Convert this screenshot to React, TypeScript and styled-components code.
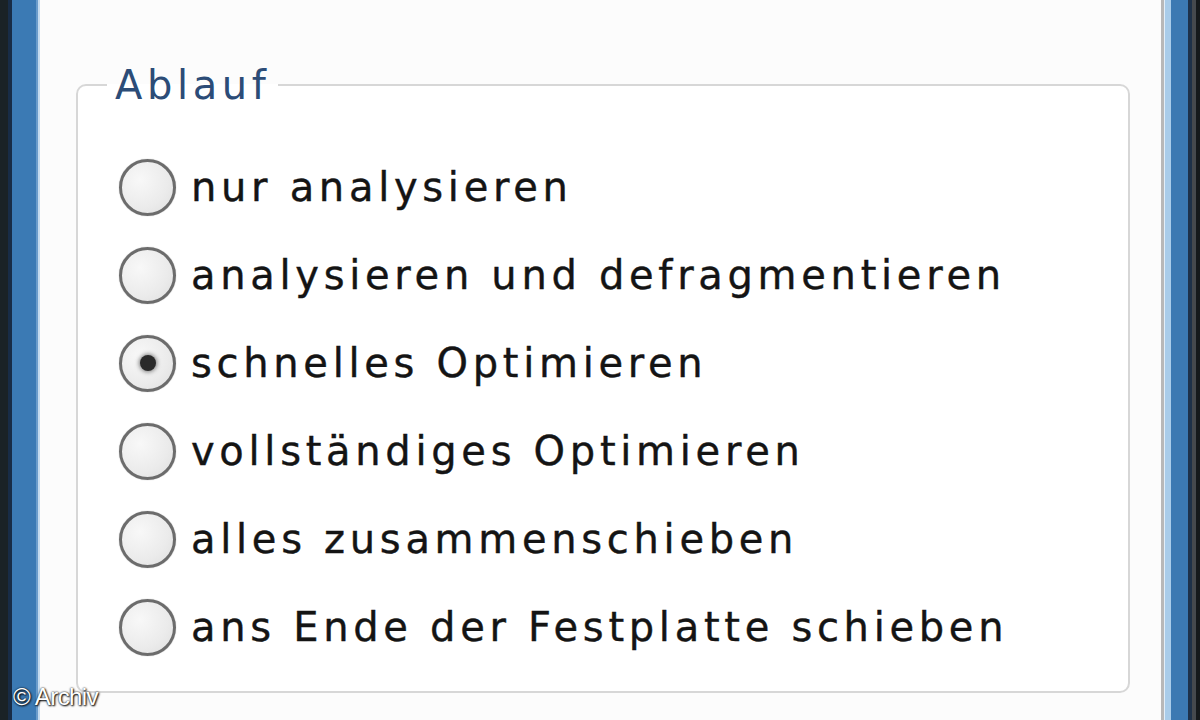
import styled, { createGlobalStyle } from 'styled-components'

const GlobalStyle = createGlobalStyle`
  html, body {
    margin: 0;
    padding: 0;
    background: #fcfcfc;
  }
`

const options = [
  { label: 'nur analysieren', checked: false },
  { label: 'analysieren und defragmentieren', checked: false },
  { label: 'schnelles Optimieren', checked: true },
  { label: 'vollständiges Optimieren', checked: false },
  { label: 'alles zusammenschieben', checked: false },
  { label: 'ans Ende der Festplatte schieben', checked: false }
]

const App = () => (
  <>
    <GlobalStyle />
    <Window>
      <Edge side="left" />
      <Body>
        <GroupBox>
          <Legend>Ablauf</Legend>
          <OptionList>
            {options.map(opt => (
              <OptionRow key={opt.label}>
                <Radio checked={opt.checked} />
                <OptionLabel>{opt.label}</OptionLabel>
              </OptionRow>
            ))}
          </OptionList>
        </GroupBox>
      </Body>
      <Edge side="right" />
      <Credit>© Archiv</Credit>
    </Window>
  </>
)

const Window = styled.div`
  position: relative;
  display: flex;
  width: 1200px;
  height: 720px;
  overflow: hidden;
`

const Edge = styled.div<{ side: 'left' | 'right' }>`
  flex: none;
  width: ${p => (p.side === 'left' ? 40 : 39)}px;
  background: ${p =>
    p.side === 'left'
      ? 'linear-gradient(to right, #1a2226 0 8px, #182c46 8px 12px, #3b7ab4 12px 36px, #6a9ccb 36px 38px, #c4dbef 38px 40px)'
      : 'linear-gradient(to right, #b8b8b8 0 3px, #e2eef8 3px 4px, #a9cce9 4px 10px, #3c79b2 10px 27px, #1e3149 27px 31px, #45494e 31px 35px, #15191c 35px 39px)'};
`

const Body = styled.div`
  flex: 1;
  background: #fcfcfc;
  padding: 65px 31px 0 36px;
`

const GroupBox = styled.fieldset`
  margin: 0;
  border: 2px solid #d7d7d7;
  border-radius: 10px;
  background: #fff;
  padding: 38px 20px 20px 41px;
  min-inline-size: 0;
`

const Legend = styled.legend`
  margin-left: -12px;
  padding: 0 8px;
  font-family: 'DejaVu Sans', Verdana, sans-serif;
  font-size: 40px;
  line-height: 40px;
  letter-spacing: 4.6px;
  color: #2c4c77;
`

const OptionList = styled.div`
  display: flex;
  flex-direction: column;
`

const OptionRow = styled.div`
  display: flex;
  align-items: center;
  gap: 15px;
  height: 88px;
`

const Radio = styled.span<{ checked: boolean }>`
  position: relative;
  flex: none;
  width: 51px;
  height: 51px;
  border-radius: 50%;
  border: 3px solid #6c6c6c;
  background: radial-gradient(circle at 35% 35%, #f8f8f8 0%, #ebebeb 60%, #dedede 100%);
  box-shadow: 0 0 1px #999;

  &::after {
    content: '';
    display: ${p => (p.checked ? 'block' : 'none')};
    position: absolute;
    left: 50%;
    top: 50%;
    width: 16px;
    height: 16px;
    margin: -8px 0 0 -8px;
    border-radius: 50%;
    background: #2a2a2a;
    box-shadow: 0 0 4px 1px rgba(40, 40, 40, 0.6);
  }
`

const OptionLabel = styled.span`
  font-family: 'DejaVu Sans', Verdana, sans-serif;
  font-size: 40px;
  letter-spacing: 4.7px;
  color: #141414;
  white-space: nowrap;
  -webkit-text-stroke: 0.4px #141414;
`

const Credit = styled.div`
  position: absolute;
  left: 13px;
  bottom: 9px;
  font-family: 'Liberation Sans', Arial, sans-serif;
  font-size: 24px;
  letter-spacing: -0.6px;
  color: #fff;
  text-shadow: 0 0 2px #000, 1px 1px 2px #000;
`

export default App
